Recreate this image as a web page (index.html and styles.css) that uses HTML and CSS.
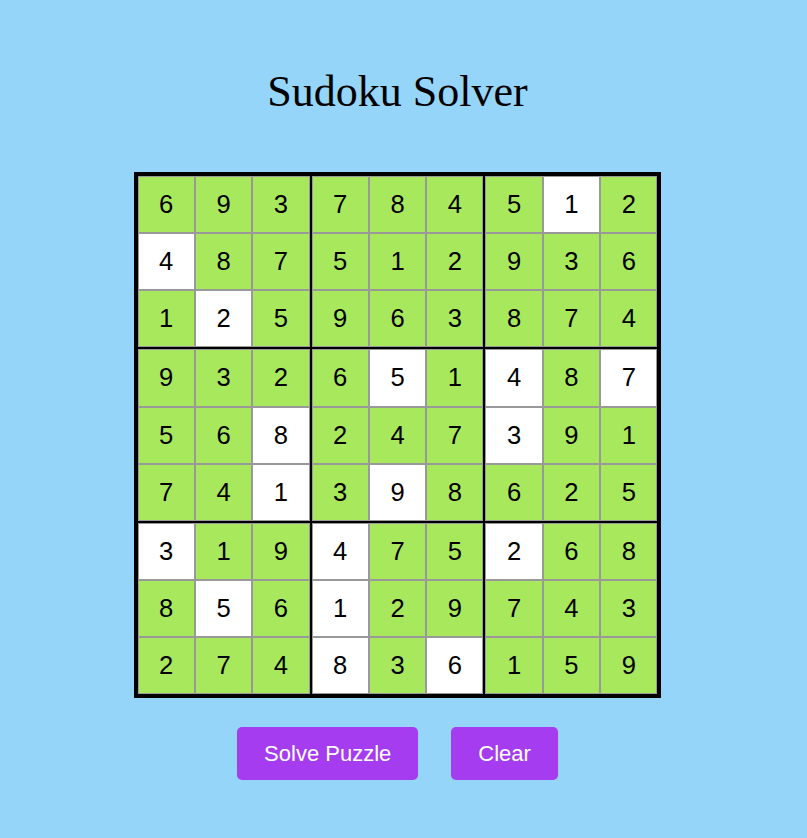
FILE: index.html
```html
<!DOCTYPE html>
<html lang="en">
<head>
<meta charset="utf-8">
<title>Sudoku Solver</title>
<link rel="stylesheet" href="styles.css">
</head>
<body>
<div class="page">
  <h1 class="title">Sudoku Solver</h1>
  <div class="board">
    <div class="cell">6</div><div class="cell">9</div><div class="cell c3">3</div><div class="cell">7</div><div class="cell">8</div><div class="cell c3">4</div><div class="cell">5</div><div class="cell given">1</div><div class="cell">2</div>
    <div class="cell given">4</div><div class="cell">8</div><div class="cell c3">7</div><div class="cell">5</div><div class="cell">1</div><div class="cell c3">2</div><div class="cell">9</div><div class="cell">3</div><div class="cell">6</div>
    <div class="cell r3">1</div><div class="cell given r3">2</div><div class="cell c3 r3">5</div><div class="cell r3">9</div><div class="cell r3">6</div><div class="cell c3 r3">3</div><div class="cell r3">8</div><div class="cell r3">7</div><div class="cell r3">4</div>
    <div class="cell">9</div><div class="cell">3</div><div class="cell c3">2</div><div class="cell">6</div><div class="cell given">5</div><div class="cell c3">1</div><div class="cell given">4</div><div class="cell">8</div><div class="cell given">7</div>
    <div class="cell">5</div><div class="cell">6</div><div class="cell c3 given">8</div><div class="cell">2</div><div class="cell">4</div><div class="cell c3">7</div><div class="cell given">3</div><div class="cell">9</div><div class="cell">1</div>
    <div class="cell r3">7</div><div class="cell r3">4</div><div class="cell c3 r3 given">1</div><div class="cell r3">3</div><div class="cell r3 given">9</div><div class="cell c3 r3">8</div><div class="cell r3">6</div><div class="cell r3">2</div><div class="cell r3">5</div>
    <div class="cell given">3</div><div class="cell">1</div><div class="cell c3">9</div><div class="cell given">4</div><div class="cell">7</div><div class="cell c3">5</div><div class="cell given">2</div><div class="cell">6</div><div class="cell">8</div>
    <div class="cell">8</div><div class="cell given">5</div><div class="cell c3">6</div><div class="cell given">1</div><div class="cell">2</div><div class="cell c3">9</div><div class="cell">7</div><div class="cell">4</div><div class="cell">3</div>
    <div class="cell">2</div><div class="cell">7</div><div class="cell c3">4</div><div class="cell given">8</div><div class="cell">3</div><div class="cell c3 given">6</div><div class="cell">1</div><div class="cell">5</div><div class="cell">9</div>
  </div>
  <div class="actions">
    <button class="btn" type="button">Solve Puzzle</button>
    <button class="btn" type="button">Clear</button>
  </div>
</div>
</body>
</html>
```

FILE: styles.css
```css
html, body {
  margin: 0;
  padding: 0;
  background: #94d5f9;
}

.page {
  width: 795px;
  height: 838px;
  box-sizing: border-box;
  padding-top: 66px;
  display: flex;
  flex-direction: column;
  align-items: center;
}

.title {
  margin: 0 0 55px;
  font-family: "Liberation Serif", "Times New Roman", serif;
  font-size: 44px;
  font-weight: normal;
  line-height: normal;
  color: #000;
}

.board {
  display: grid;
  grid-template-columns: repeat(9, auto);
  border: 4px solid #000;
  background: #000;
}

.cell {
  width: 57.33px;
  height: 57.15px;
  box-sizing: border-box;
  border: 1px solid #999;
  background: #a7e85c;
  display: flex;
  align-items: center;
  justify-content: center;
  font-family: "Liberation Sans", Arial, sans-serif;
  font-size: 25.6px;
  color: #000;
}

.cell.given {
  background: #fff;
}

.cell.c3 {
  margin-right: 2px;
}

.cell.r3 {
  margin-bottom: 2px;
}

.actions {
  margin-top: 29px;
  display: flex;
  gap: 33px;
}

.btn {
  height: 53px;
  padding: 0 27px;
  border: none;
  border-radius: 5px;
  background: #a63cef;
  color: #fff;
  font-family: "Liberation Sans", Arial, sans-serif;
  font-size: 22px;
  cursor: pointer;
}
```
